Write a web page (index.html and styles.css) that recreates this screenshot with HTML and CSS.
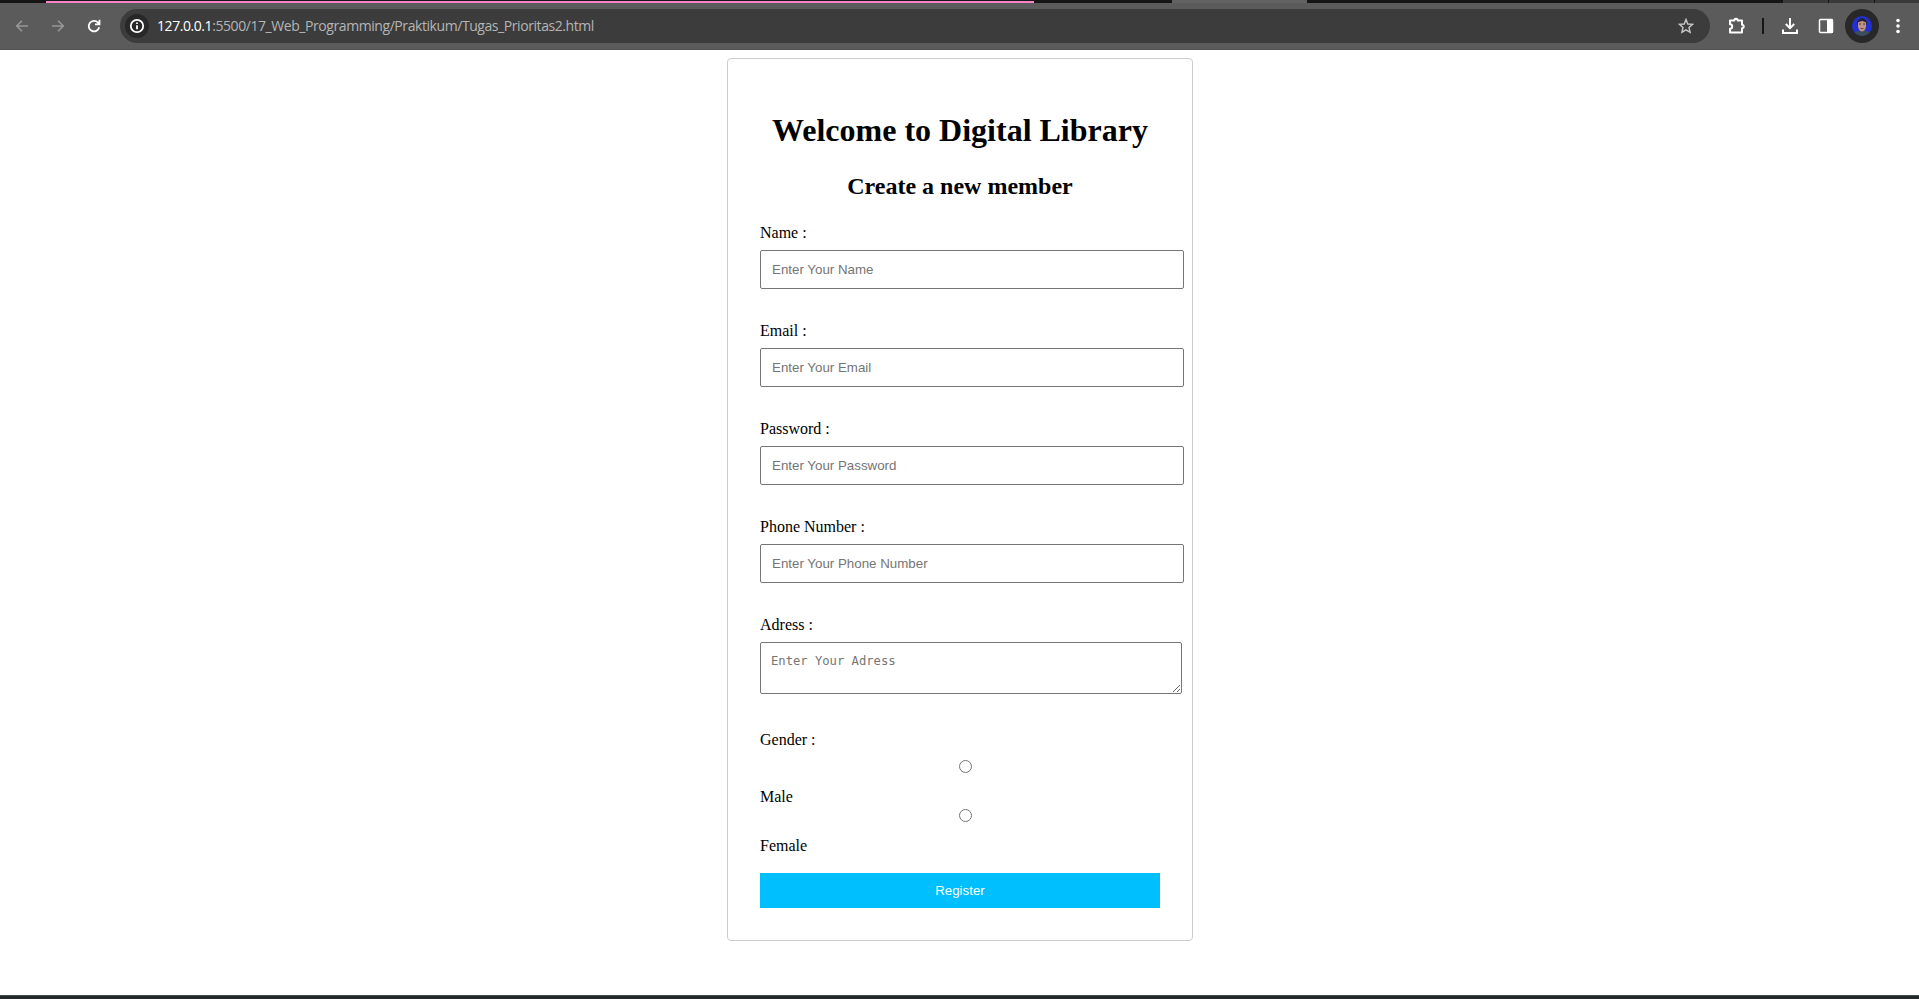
FILE: index.html
```html
<!DOCTYPE html>
<html lang="en">
<head>
<meta charset="utf-8">
<title>Digital Library</title>
<link rel="stylesheet" href="styles.css">
</head>
<body>
<header class="browser">
  <div class="tabs">
    <div class="tab-gap"></div><div class="tab-group"></div><div class="tab-rest"></div>
    <div class="tab-active"></div><div class="tab-empty"></div>
    <div class="win-btn"></div><div class="win-btn"></div><div class="win-btn last"></div>
  </div>
  <div class="toolbar">
    <div class="nav">
      <svg class="icon dim" viewBox="0 0 16 16"><path d="M14 8H3M8 2.7L2.7 8L8 13.3"/></svg>
      <svg class="icon dim" viewBox="0 0 16 16"><path d="M2 8h11M8 2.7L13.3 8L8 13.3"/></svg>
      <svg class="icon" viewBox="0 0 16 16"><path d="M13.2 9.3A5.3 5.3 0 1 1 12 4.6L13.4 6M13.5 1.8V6.3H9"/></svg>
    </div>
    <div class="address">
      <span class="site-info"><svg class="icon" viewBox="0 0 16 16"><circle cx="8" cy="8" r="6.2"/><path d="M8 7.2v4M8 4.4v1.7"/></svg></span>
      <span class="url"><b>127.0.0.1</b>:5500/17_Web_Programming/Praktikum/Tugas_Prioritas2.html</span>
      <svg class="icon star" viewBox="0 0 16 16"><path d="M8 1.5l1.8 4.5 4.8.4-3.6 3.1 1.1 4.8L8 11.8l-4.1 2.5L5 9.5 1.4 6.4 6.2 6z"/></svg>
    </div>
    <div class="actions">
      <svg class="ext" viewBox="0 0 18 18"><path stroke-linejoin="round" d="M2 3.500H6.300A1.700 1.700 0 0 1 9.700 3.500H14V7.800A1.700 1.700 0 0 1 14 11.200V15.500H2V11.700A2.200 2.200 0 0 0 2 7.300Z"/></svg>
      <span class="divider"></span>
      <svg class="download" viewBox="0 0 18 18"><path d="M9 1v10M4.800 7L9 11.200L13.200 7M2 12.500V16H16V12.500"/></svg>
      <svg class="panel" viewBox="0 0 16 16"><rect x="1.500" y="1.500" width="13" height="13" rx="1"/><path class="fill" d="M9 1h6v14H9z"/></svg>
      <span class="profile"><svg viewBox="0 0 20 20"><defs><clipPath id="round"><circle cx="10" cy="10" r="10"/></clipPath></defs><g clip-path="url(#round)"><path fill="#2230d2" d="M0 0h20v20H0z"/><path fill="#3c4e58" d="M1 20l1-3.500 5-2h6l5 2 1 3.500z"/><path fill="#26222a" d="M5.200 8.500C4.200 0 15.800 0 14.800 8.500z"/><path fill="#c09482" d="M6 6.500Q10 3.500 14 6.500V10Q13.500 15 10 15.500Q6.500 15 6 10z"/><path fill="#54342f" d="M7 7.500h2v1H7zM11 7.500h2v1h-2zM8.500 12h3v.8h-3z"/></g></svg></span>
      <svg class="dots" viewBox="0 0 4 16"><circle cx="2" cy="2.500" r="1.800"/><circle cx="2" cy="8" r="1.800"/><circle cx="2" cy="13.500" r="1.800"/></svg>
    </div>
  </div>
</header>
<main class="page">
  <form class="card">
    <h1>Welcome to Digital Library</h1>
    <h2>Create a new member</h2>
    <div class="field"><label for="name">Name :</label><input id="name" type="text" placeholder="Enter Your Name"></div>
    <div class="field"><label for="email">Email :</label><input id="email" type="email" placeholder="Enter Your Email"></div>
    <div class="field"><label for="password">Password :</label><input id="password" type="password" placeholder="Enter Your Password"></div>
    <div class="field"><label for="phone">Phone Number :</label><input id="phone" type="text" placeholder="Enter Your Phone Number"></div>
    <div class="field address-field"><label for="adress">Adress :</label><textarea id="adress" placeholder="Enter Your Adress"></textarea></div>
    <div class="gender">
      <span class="label">Gender :</span>
      <input type="radio" name="gender" id="male"><label for="male">Male</label>
      <input type="radio" name="gender" id="female"><label for="female">Female</label>
    </div>
    <button type="button">Register</button>
  </form>
</main>
<footer class="taskbar"></footer>
</body>
</html>
```
FILE: styles.css
```css
* { box-sizing: border-box; }
body {
  margin: 0;
  height: 999px;
  display: flex;
  flex-direction: column;
  overflow: hidden;
  background: #fff;
  color: #000;
  font: 16px/18px "Liberation Serif", "Times New Roman", serif;
}
.browser { height: 50px; background: #5b5b5b; }
.tabs { display: flex; height: 3px; background: #151515; }
.tab-gap { width: 46px; }
.tab-group { width: 982px; height: 2px; margin-top: 1px; background: #fc83c7; }
.tab-group { width: 988px; }
.tab-rest { width: 138px; }
.tab-active { width: 135px; background: #626262; }
.tab-empty { flex: 1; }
.win-btn { width: 46px; background: #3a3a3a; border-right: 1px solid #151515; }
.win-btn.last { width: 44px; border: 0; }
.toolbar { display: flex; align-items: center; height: 47px; padding-bottom: 1px; border-bottom: 1px solid #525252; }
.nav { display: flex; gap: 20px; width: 120px; padding-left: 14px; }
.icon { display: block; width: 16px; height: 16px; fill: none; stroke: #fff; stroke-width: 1.8; }
.icon.dim { stroke: #989898; stroke-width: 1.6; }
.address { display: flex; align-items: center; width: 1590px; height: 34px; padding: 0 16px 0 5px; border-radius: 17px; background: #3c3c3c; }
.site-info { display: grid; place-items: center; width: 24px; height: 24px; border-radius: 50%; background: #282828; }
.url { margin-left: 8px; font: 14px/20px "Open Sans", sans-serif; letter-spacing: -0.43px; color: #b5b5b5; white-space: nowrap; }
.url b { font-weight: 400; color: #fff; }
.star { margin-left: auto; stroke: #c7c7c7; stroke-width: 1.4; }
.actions { display: flex; align-items: center; flex: 1; }
.actions svg { display: block; flex: none; fill: none; stroke: #fff; stroke-width: 2; }
.actions .ext { width: 18px; height: 18px; margin-left: 18px; }
.divider { width: 2px; height: 16px; margin-left: 16px; background: #161616; }
.actions .download { width: 18px; height: 18px; margin-left: 17px; }
.actions .panel { width: 16px; height: 16px; margin-left: 19px; stroke-width: 1.5; }
.actions .panel .fill { fill: #fff; stroke: none; }
.profile { display: grid; place-items: center; width: 34px; height: 34px; margin-left: 11px; border-radius: 50%; background: #282828; }
.actions .profile svg { width: 20px; height: 20px; stroke: none; }
.actions .dots { width: 4px; height: 16px; margin-left: 17px; fill: #fff; stroke: none; }
.page { flex: 1; padding: 8px 0 0 1px; }
.card { width: 466px; height: 883px; margin: 0 auto; padding: 32px; border: 1px solid #ccc; border-radius: 4px; }
h1 { margin: 21px 0 24px; font-size: 32px; line-height: 37px; text-align: center; white-space: nowrap; }
h2 { margin: 0 0 24px; font-size: 24px; line-height: 27px; text-align: center; }
.field { display: flex; flex-direction: column; align-items: flex-start; gap: 8px; height: 98px; }
.field input, textarea { width: 424px; height: 39px; margin: 0; padding: 11px; border: 1px solid #767676; border-radius: 2px; font: 13.333px "Liberation Sans", Arial, sans-serif; }
.field input::placeholder, textarea::placeholder { color: #757575; }
.address-field { height: 115px; }
.field textarea { width: 422px; height: 52px; padding: 11px 10px 9px; font: 12.18px/15px "DejaVu Sans Mono", monospace; }
.gender { display: flex; flex-direction: column; height: 142px; }
.gender input { width: 13px; height: 13px; margin: 11px 0 15px 198.5px; }
.gender label + input { margin-top: 3px; }
button { display: block; width: 400px; height: 35px; padding: 0; border: 0; background: #00bfff; color: #fff; font: 13.333px "Liberation Sans", Arial, sans-serif; }
.taskbar { height: 4px; background: #252828; border-top: 1px solid #414b47; }
```
